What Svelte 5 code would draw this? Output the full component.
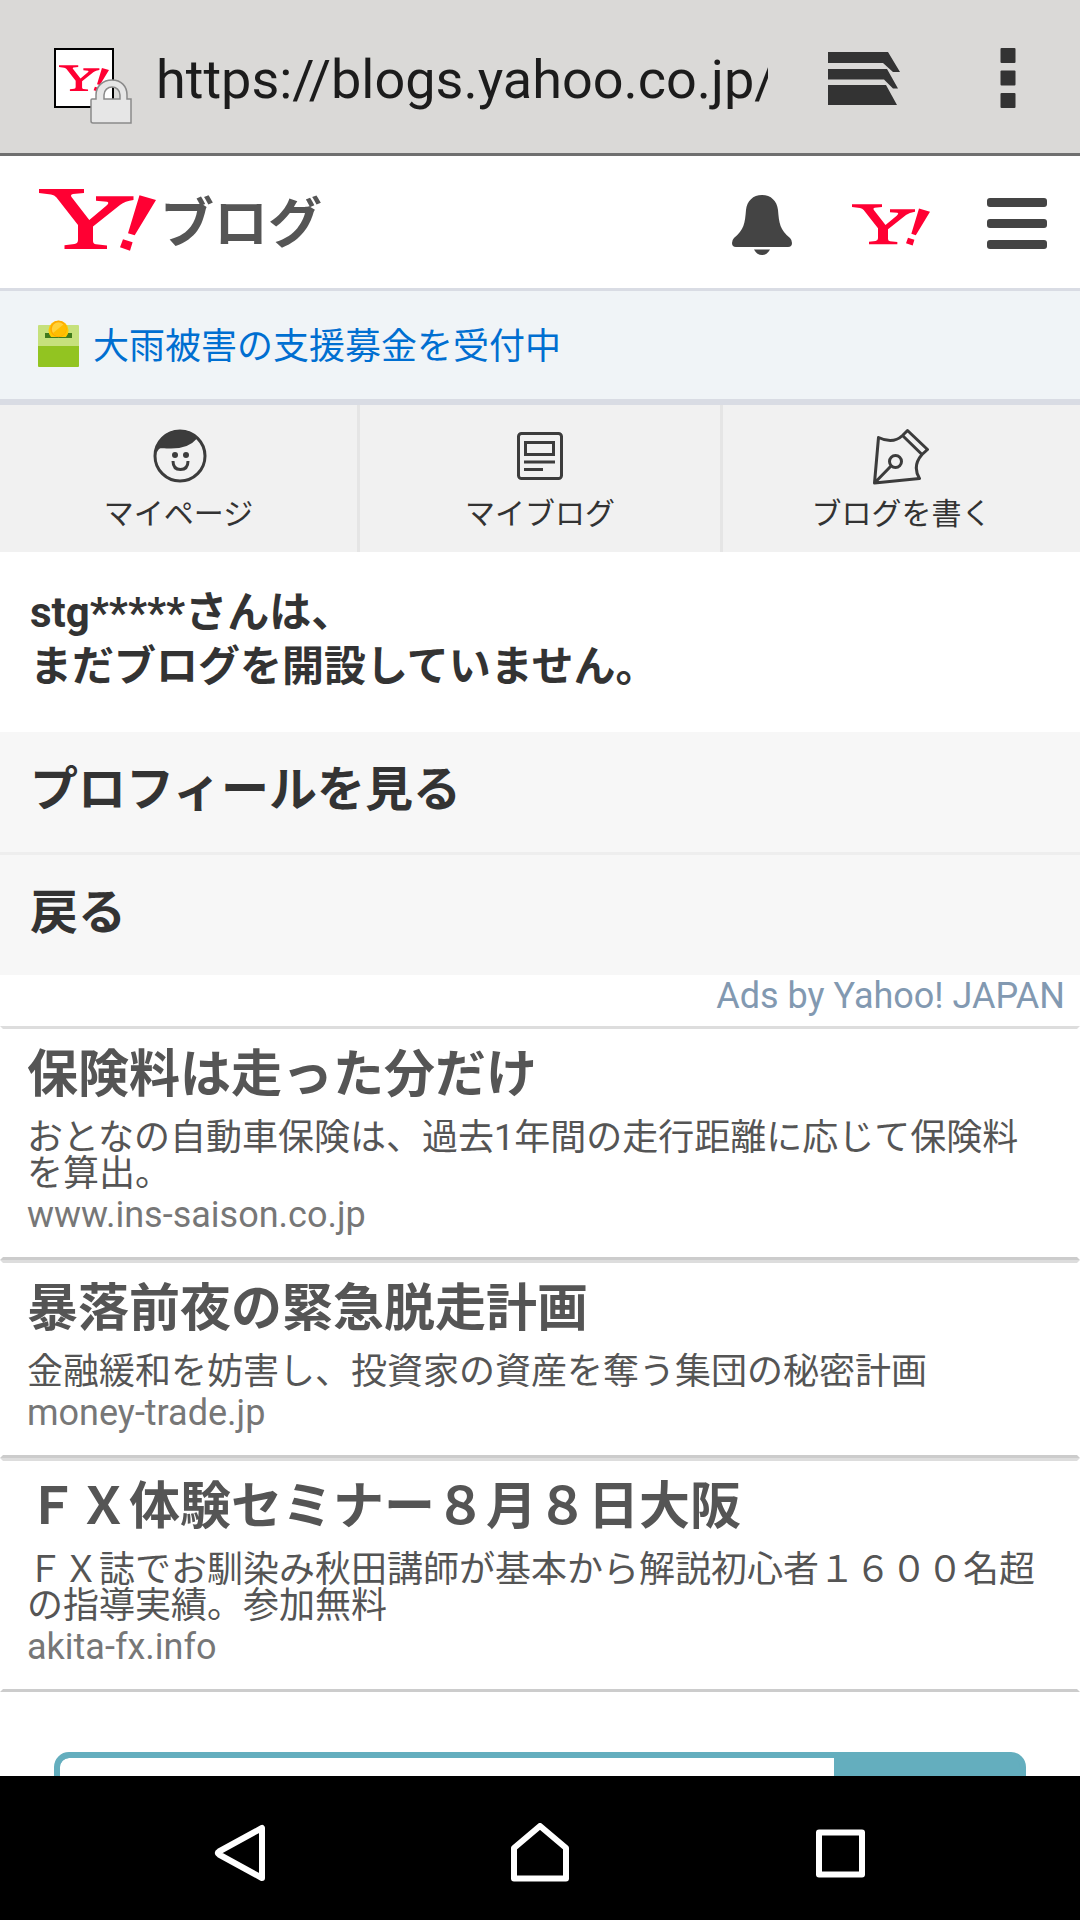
<script lang="ts">
	type Ad = { title: string; desc: string; host: string };

	let url = $state("https://blogs.yahoo.co.jp/");
	let query = $state("");

	const ads: Ad[] = [
		{
			title: "保険料は走った分だけ",
			desc: "おとなの自動車保険は、過去1年間の走行距離に応じて保険料を算出。",
			host: "www.ins-saison.co.jp",
		},
		{
			title: "暴落前夜の緊急脱走計画",
			desc: "金融緩和を妨害し、投資家の資産を奪う集団の秘密計画",
			host: "money-trade.jp",
		},
		{
			title: "ＦＸ体験セミナー８月８日大阪",
			desc: "ＦＸ誌でお馴染み秋田講師が基本から解説初心者１６００名超の指導実績。参加無料",
			host: "akita-fx.info",
		},
	];
</script>

{#snippet mark(cls: string)}
	<svg class={cls} viewBox="0 0 117 62" aria-hidden="true">
		<path
			fill="#ff0033"
			d="M0 0H45V4L34 5Q31 5.500 32.500 8L50.300 31L67 17Q71 13.500 68 12.700L57 11.700V7.300H94.500V11Q86 12 81 16L54 37.500V52Q54 55 57 55.300L68 56.500V60H25.500V56.300L35.500 55Q39 54.500 39 51V36L17.500 8.500Q15.500 6.300 12 5.600L0 4Z"
		/>
		<path fill="#ff0033" d="M100.500 6.300L117 11L95.700 46.300L89 44.300ZM84 50.300L93.600 53.300L91 61.700L81 58.300Z" />
	</svg>
{/snippet}

<div class="screen">
	<div class="browser">
		<span class="favicon">
			{@render mark("fav-mark")}
			<svg class="lock" viewBox="0 0 42 46" aria-hidden="true">
				<path
					fill="#e6e6e6"
					fill-rule="evenodd"
					stroke="#8a8a8a"
					stroke-width="1.500"
					d="M1 21Q1 20 2 20H6V16C6 7 13 1 22 1S37 7 37 16V20H41V44H3Q1 44 1 42ZM14 20H30V16C30 11 26 8 22 8S14 11 14 16Z"
				/>
			</svg>
		</span>
		<input class="url" type="text" aria-label="URL" bind:value={url} />
		<button class="tabs" aria-label="タブ">
			<svg width="72" height="53" viewBox="0 0 72 53" fill="#333">
				<path d="M0 0H60L72 20H65L55 11H0ZM0 17H59L70 36.500H65L56 27.500H0ZM0 33H58L69 53H0Z" />
			</svg>
		</button>
		<button class="more" aria-label="メニュー">
			<svg width="16" height="60" viewBox="0 0 16 60" fill="#333">
				<rect x="0.500" width="15" height="15" rx="1" />
				<rect x="0.500" y="22.500" width="15" height="15" rx="1" />
				<rect x="0.500" y="45" width="15" height="15" rx="1" />
			</svg>
		</button>
	</div>

	<main class="page">
		<header class="masthead">
			<a class="logo" href="#top" aria-label="Yahoo!ブログ">
				{@render mark("logo-mark")}
				<span>ブログ</span>
			</a>
			<button aria-label="お知らせ">
				<svg width="60" height="60" viewBox="0 0 60 60" fill="#444">
					<path d="M30 0C39 0 45 6 46 15C47 28 48 35 58 43Q60 45 60 48Q60 52 56 52H4Q0 52 0 48Q0 45 2 43C12 35 13 28 14 15C15 6 21 0 30 0Z" />
					<path d="M22 54.500H38Q35 60 30 60T22 54.500Z" />
				</svg>
			</button>
			<a href="#yahoo" aria-label="Yahoo! JAPAN">{@render mark("top-mark")}</a>
			<button class="burger" aria-label="メニューを開く">
				<svg width="60" height="51" viewBox="0 0 60 51" fill="#444">
					<rect width="60" height="9" rx="3" />
					<rect y="21" width="60" height="9" rx="3" />
					<rect y="42" width="60" height="9" rx="3" />
				</svg>
			</button>
		</header>

		<a class="notice" href="#donate">
			<svg width="41" height="47" viewBox="0 0 41 47" aria-hidden="true">
				<rect y="5" width="41" height="24" rx="1" fill="#c6e17c" />
				<path d="M0 26H41V46Q41 47 40 47H1Q0 47 0 46Z" fill="#92c421" />
				<rect x="7" y="13" width="27" height="5" fill="#3f7a1c" />
				<path d="M13 17A10 10 0 1 1 28 17Z" fill="#ffc800" />
				<circle cx="20.500" cy="9" r="7.500" fill="#ffd238" stroke="#ffa800" stroke-width="1.500" />
				<path d="M15 13L26 4A7 7 0 0 1 21 16Q17 16 15 13Z" fill="#ffbe00" />
			</svg>
			大雨被害の支援募金を受付中
		</a>

		<nav class="menu">
			<a href="#mypage">
				<svg width="58" height="58" viewBox="0 0 58 58" fill="none" stroke="#3c3c3c" stroke-width="3">
					<circle cx="30" cy="29" r="25" />
					<path d="M6 25C9 12 18 4 30 4C37 4 42 6 46 11Q36 23 12 20Q8 20 6 25Z" fill="#3c3c3c" stroke-width="2" />
					<circle cx="25" cy="28" r="3" fill="#3c3c3c" stroke="none" />
					<circle cx="36" cy="28" r="3" fill="#3c3c3c" stroke="none" />
					<path d="M23 34Q23 42.500 30.500 42.500T38 34" />
				</svg>
				マイページ
			</a>
			<a href="#myblog">
				<svg width="58" height="58" viewBox="0 0 58 58" fill="none" stroke="#3c3c3c" stroke-width="3">
					<rect x="7.500" y="6.500" width="43" height="45" rx="3" />
					<rect x="14.500" y="15.500" width="28" height="12" />
					<path d="M13 35H44M13 42.500H32" />
				</svg>
				マイブログ
			</a>
			<a href="#write">
				<svg width="58" height="58" viewBox="2 0 58 58" fill="none" stroke="#3c3c3c" stroke-width="3" stroke-linejoin="round">
					<path d="M7.500 10.500Q22 17.500 31.500 8.500L51 27.500Q41 39 48.500 51.500L3.500 56ZM31.500 8.500L36.500 3.500L56.500 22.500L51 27.500M3.500 56L20 39" />
					<circle cx="24.500" cy="34.500" r="6" />
				</svg>
				ブログを書く
			</a>
		</nav>

		<h1>stg*****さんは、<br />まだブログを開設していません。</h1>

		<ul class="links">
			<li><a href="#profile">プロフィールを見る</a></li>
			<li><a href="#back">戻る</a></li>
		</ul>

		<section class="ads">
			<a class="by" href="#ads">Ads by Yahoo! JAPAN</a>
			{#each ads as ad (ad.host)}
				<a class="ad" href="#{ad.host}">
					<h2>{ad.title}</h2>
					<p>{ad.desc}</p>
					<cite>{ad.host}</cite>
				</a>
			{/each}
		</section>

		<form class="search" onsubmit={(e) => e.preventDefault()}>
			<input type="search" aria-label="検索" bind:value={query} />
			<button aria-label="検索する"></button>
		</form>
	</main>

	<div class="system">
		<button aria-label="戻る">
			<svg width="60" height="60" viewBox="0 0 60 60"><path d="M52 5V55L9 31.500Q6.500 30 9 28.500Z" /></svg>
		</button>
		<button aria-label="ホーム">
			<svg width="60" height="60" viewBox="0 0 60 60"><path d="M30 3L56 25V55.500H4V25Z" /></svg>
		</button>
		<button aria-label="履歴">
			<svg width="60" height="60" viewBox="0 0 60 60"><rect x="9" y="9.500" width="43" height="42" /></svg>
		</button>
	</div>
</div>

<style>
	:global(body) {
		margin: 0;
		background: #fff;
	}
	.screen {
		display: flex;
		flex-direction: column;
		height: 100vh;
		font-family: Roboto, "Noto Sans CJK JP", sans-serif;
		color: #333;
	}
	a {
		color: inherit;
		text-decoration: none;
	}
	button {
		padding: 0;
		border: none;
		background: none;
	}
	svg {
		display: block;
	}

	.browser {
		display: flex;
		align-items: center;
		box-sizing: border-box;
		height: 156px;
		padding: 3px 64px 0 54px;
		background: #dad9d7;
		border-bottom: 3px solid #6f6f6f;
	}
	.favicon {
		position: relative;
		display: flex;
		align-items: center;
		justify-content: center;
		box-sizing: border-box;
		width: 60px;
		height: 60px;
		margin-right: 42px;
		background: #fff;
		border: 2px solid #000;
	}
	.fav-mark {
		width: 50px;
		height: 27px;
	}
	.lock {
		position: absolute;
		left: 34px;
		top: 29px;
		width: 42px;
		height: 46px;
	}
	.url {
		flex: 1;
		min-width: 0;
		padding: 4px 0 0;
		border: none;
		outline: none;
		background: transparent;
		color: #1c1c1c;
		font: 54px/66px Roboto, sans-serif;
	}
	.tabs {
		margin: 0 100px 0 60px;
	}

	.page {
		flex: 1;
		min-height: 0;
		overflow: hidden;
	}
	.masthead {
		display: flex;
		align-items: center;
		gap: 60px;
		height: 132px;
		padding: 6px 33px 0 39px;
		box-sizing: border-box;
	}
	.logo {
		display: flex;
		align-items: center;
		gap: 4px;
		flex: 1;
		color: #555;
		font-size: 54px;
		font-weight: 700;
		line-height: 60px;
	}
	.logo-mark {
		width: 117px;
		height: 62px;
		margin-bottom: 10px;
	}
	.top-mark {
		width: 78px;
		height: 42px;
	}
	.burger {
		margin: 0 0 3px -3px;
	}

	.notice {
		display: flex;
		align-items: center;
		gap: 14px;
		height: 104px;
		padding: 0 38px 4px;
		background: #f0f4f7;
		border-top: 3px solid #d9dce4;
		border-bottom: 6px solid #d9dce4;
		color: #006fd1;
		font-size: 36px;
	}

	.menu {
		display: grid;
		grid-template-columns: repeat(3, 1fr);
		height: 147px;
		background: #f1f1f1;
	}
	.menu a {
		display: flex;
		flex-direction: column;
		align-items: center;
		gap: 8px;
		padding-top: 22px;
		font-size: 30px;
		line-height: 42px;
	}
	.menu a:first-child {
		border-right: 3px solid #e5e5e5;
	}
	.menu a:last-child {
		border-left: 3px solid #e5e5e5;
	}

	h1 {
		margin: 0;
		padding: 34px 30px 38px;
		font-size: 42px;
		line-height: 54px;
	}

	.links {
		margin: 0;
		padding: 0;
		list-style: none;
		background: #f7f7f7;
		font-size: 48px;
		font-weight: 700;
	}
	.links a {
		display: block;
		padding: 0 30px 4px;
		line-height: 116px;
	}
	.links li + li {
		border-top: 3px solid #eee;
	}

	.by {
		display: block;
		padding: 0 15px 9px;
		color: #8299b1;
		font-size: 36px;
		line-height: 42px;
		text-align: right;
	}
	.ad {
		display: block;
		padding: 13px 24px 21px;
		border: 3px solid #fff;
		border-top-color: #ddd;
		border-bottom-color: #ccc;
		color: #555;
	}
	.ad h2 {
		margin: 0 0 12px;
		font-size: 51px;
		line-height: 66px;
	}
	.ad p {
		margin: 0 0 2px;
		font-size: 36px;
		line-height: 36px;
	}
	.ad cite {
		display: block;
		color: #777;
		font-size: 36px;
		font-style: normal;
		line-height: 42px;
	}

	.search {
		display: flex;
		margin: 60px 54px;
		overflow: hidden;
		border: 6px solid #64aebe;
		border-radius: 15px;
		background: #64aebe;
	}
	.search input {
		flex: 1;
		min-width: 0;
		height: 84px;
		padding: 0 18px;
		border: none;
		border-radius: 9px 0 0 0;
		outline: none;
		background: #fff;
		font-size: 36px;
	}
	.search button {
		width: 186px;
	}

	.system {
		display: flex;
		align-items: center;
		justify-content: center;
		gap: 240px;
		height: 144px;
		padding-top: 9px;
		box-sizing: border-box;
		background: #000;
	}
	.system path,
	.system rect {
		fill: none;
		stroke: #fff;
		stroke-width: 6;
		stroke-linejoin: round;
	}
</style>
